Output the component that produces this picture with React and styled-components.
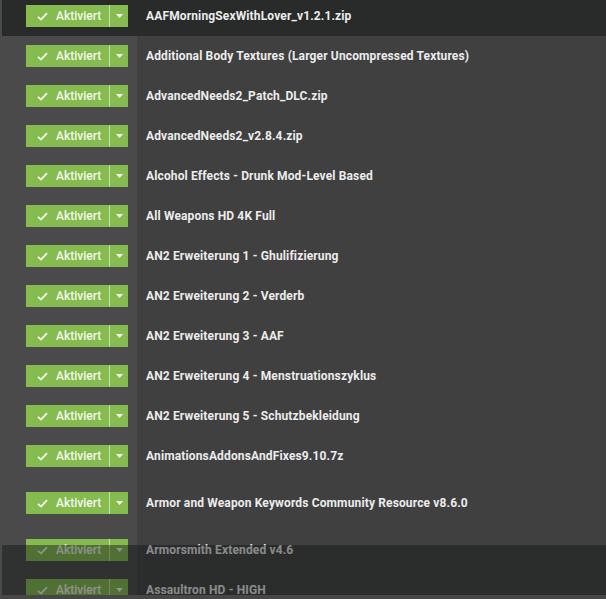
import React from "react";
import styled, { createGlobalStyle } from "styled-components";

const MODS = [
    { name: "AAFMorningSexWithLover_v1.2.1.zip", selected: true },
    { name: "Additional Body Textures (Larger Uncompressed Textures)" },
    { name: "AdvancedNeeds2_Patch_DLC.zip" },
    { name: "AdvancedNeeds2_v2.8.4.zip" },
    { name: "Alcohol Effects - Drunk Mod-Level Based" },
    { name: "All Weapons HD 4K Full" },
    { name: "AN2 Erweiterung 1 - Ghulifizierung" },
    { name: "AN2 Erweiterung 2 - Verderb" },
    { name: "AN2 Erweiterung 3 - AAF" },
    { name: "AN2 Erweiterung 4 - Menstruationszyklus" },
    { name: "AN2 Erweiterung 5 - Schutzbekleidung" },
    { name: "AnimationsAddonsAndFixes9.10.7z" },
    { name: "Armor and Weapon Keywords Community Resource v8.6.0", tall: true },
    { name: "Armorsmith Extended v4.6" },
    { name: "Assaultron HD - HIGH" },
];

const GlobalStyle = createGlobalStyle`
    html, body {
        margin: 0;
        padding: 0;
        background: #404040;
        overflow: hidden;
    }
    body {
        font-family: Roboto, "Liberation Sans", sans-serif;
    }
`;

const CheckIcon = () => (
    <svg width="11" height="9" viewBox="0 0 11 9">
        <path
            d="M1 4.8 L4 7.6 L10 1.2"
            fill="none"
            stroke="#f4f9ee"
            strokeWidth="1.8"
        />
    </svg>
);

const CaretIcon = () => (
    <svg width="7" height="4" viewBox="0 0 7 4">
        <path d="M0 0 H7 L3.5 4 Z" fill="#f4f9ee" />
    </svg>
);

const ModRow = ({ item }) => (
    <Row $selected={item.selected} $tall={item.tall}>
        <StatusCell $selected={item.selected}>
            <SplitButton>
                <MainPart>
                    <CheckIcon />
                    <span>Aktiviert</span>
                </MainPart>
                <CaretPart>
                    <CaretIcon />
                </CaretPart>
            </SplitButton>
        </StatusCell>
        <NameCell>{item.name}</NameCell>
    </Row>
);

const App = () => {
    return (
        <>
            <GlobalStyle />
            <Page>
                <List>
                    {MODS.map((item, idx) => (
                        <ModRow key={idx} item={item} />
                    ))}
                </List>
                <Footer />
                <BottomEdge />
            </Page>
        </>
    );
};

export default App;

const Page = styled.div`
    position: relative;
    width: 606px;
    height: 599px;
    overflow: hidden;
    background: #404040;
    border-left: 2px solid #4a4a4a;
    box-sizing: border-box;
`;

const List = styled.div`
    display: flex;
    flex-direction: column;
    margin-top: -4px;
`;

const Row = styled.div`
    display: flex;
    height: ${(p) => (p.$tall ? "54px" : "40px")};
    flex-shrink: 0;
    background: ${(p) => (p.$selected ? "#292b2b" : "#404040")};
`;

const StatusCell = styled.div`
    width: 135px;
    flex-shrink: 0;
    display: flex;
    align-items: center;
    padding-left: 24px;
    box-sizing: border-box;
    background: ${(p) => (p.$selected ? "transparent" : "#4a4a4a")};
`;

const SplitButton = styled.div`
    display: flex;
    height: 22px;
    background: #86bc4f;
    color: #f4f9ee;
    font-size: 12px;
    font-weight: 500;
`;

const MainPart = styled.div`
    display: flex;
    align-items: center;
    width: 84px;
    padding-left: 11px;
    gap: 8px;
    box-sizing: border-box;
    border-right: 1px solid #c8e2ad;
`;

const CaretPart = styled.div`
    display: flex;
    align-items: center;
    justify-content: center;
    width: 18px;
`;

const NameCell = styled.div`
    display: flex;
    align-items: center;
    padding-left: 9px;
    font-size: 12px;
    font-weight: 700;
    letter-spacing: 0.14px;
    color: #ececec;
    white-space: nowrap;
`;

const Footer = styled.div`
    position: absolute;
    left: 0;
    right: 0;
    top: 545px;
    height: 50px;
    background: rgba(18, 20, 20, 0.45);
`;

const BottomEdge = styled.div`
    position: absolute;
    left: -2px;
    right: 0;
    bottom: 0;
    height: 4px;
    background: #474747;
`;
